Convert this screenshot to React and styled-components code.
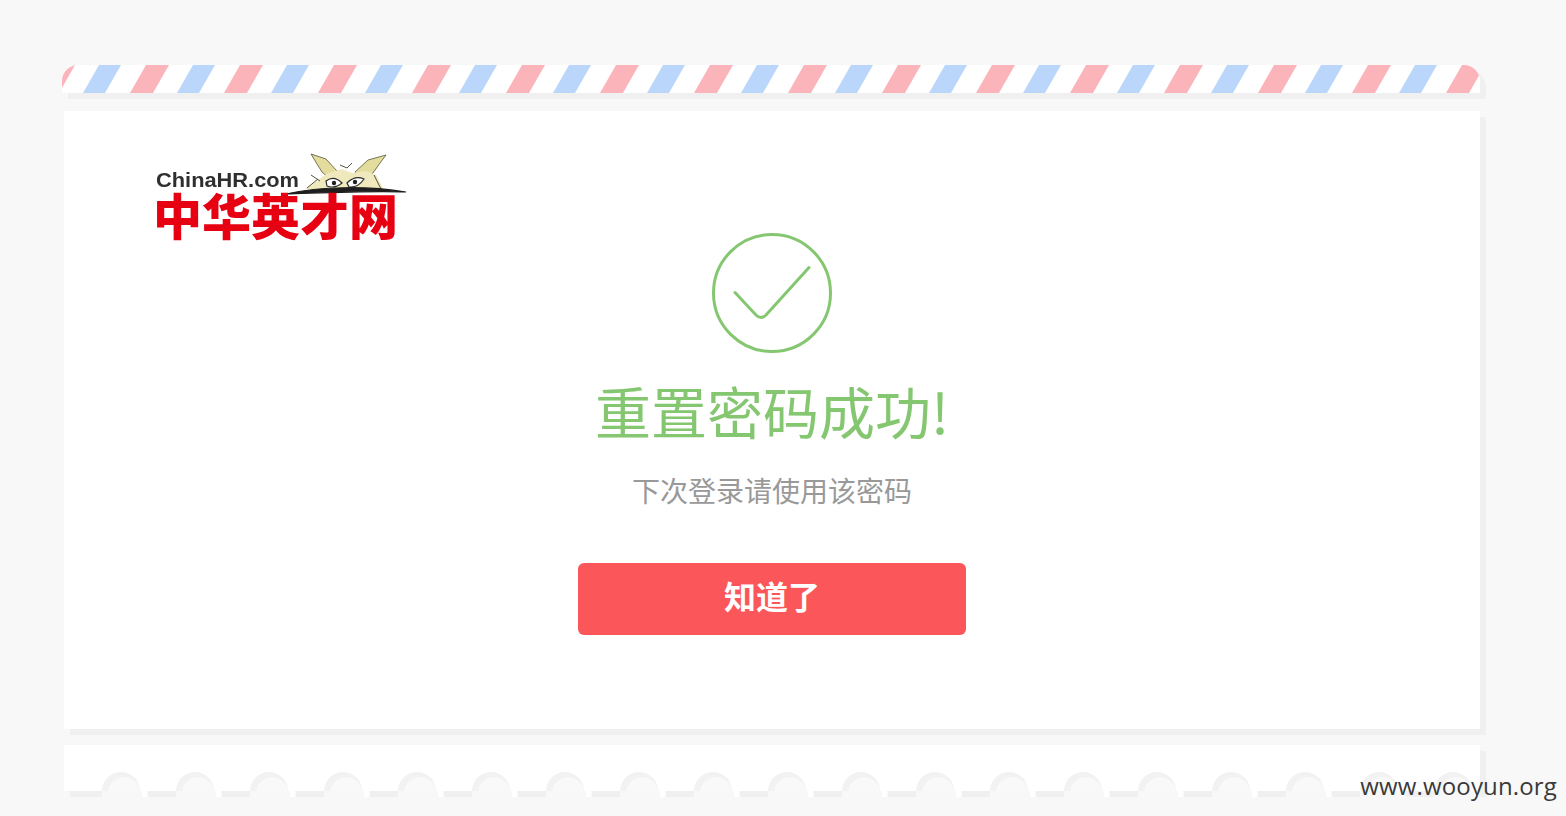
import React from "react";
import styled, { createGlobalStyle } from "styled-components";

const GlobalStyle = createGlobalStyle`
  html, body {
    margin: 0;
    padding: 0;
    background: #f8f8f8;
  }
`;

const Page = styled.div`
  position: relative;
  height: 816px;
  overflow: hidden;
  box-sizing: border-box;
  padding: 65px 0 0 64px;
  background: #f8f8f8;
  font-family: "Noto Sans CJK SC", sans-serif;
`;

const Airmail = styled.div`
  width: 1418px;
  height: 28px;
  margin-left: -2px;
  border-radius: 16px 16px 0 0;
  background: #fff;
  box-shadow: 6px 6px 0 #f0f0f0;
  overflow: hidden;
  svg {
    display: block;
  }
`;

const Card = styled.div`
  width: 1416px;
  height: 618px;
  margin-top: 18px;
  box-sizing: border-box;
  padding-top: 40px;
  background: #fff;
  box-shadow: 6px 6px 0 #f0f0f0;
  display: flex;
  flex-direction: column;
  align-items: center;
`;

const LogoRow = styled.div`
  align-self: stretch;
  height: 82px;
  padding-left: 86px;
`;

const LogoSvg = styled.svg`
  display: block;
  filter: blur(0.55px);
`;

const LogoLatin = styled.text`
  font-family: "Liberation Sans", Arial, sans-serif;
  font-size: 21px;
  font-weight: 700;
  fill: #2f2f2f;
`;

const LogoCjk = styled.text`
  font-family: "Noto Sans CJK SC", sans-serif;
  font-size: 49px;
  font-weight: 900;
  fill: #e60012;
`;

const Title = styled.h1`
  margin: 25px 0 0;
  font-size: 56px;
  line-height: 64px;
  font-weight: 400;
  color: #85c771;
  white-space: nowrap;
`;

const Hint = styled.p`
  margin: 28px 0 0;
  font-size: 28px;
  line-height: 40px;
  font-weight: 400;
  color: #999;
`;

const ConfirmButton = styled.button`
  width: 388px;
  height: 72px;
  margin-top: 53px;
  padding: 0 0 8px;
  border: 0;
  border-radius: 6px;
  background: #fb575a;
  color: #fff;
  font-family: inherit;
  font-size: 32px;
  font-weight: 700;
`;

const Stamp = styled.div`
  position: relative;
  width: 1416px;
  height: 46px;
  margin-top: 16px;
  background: #fff;
  box-shadow: 6px 6px 0 #f0f0f0;
`;

const Perforation = styled.svg`
  position: absolute;
  left: 0;
  top: 26px;
`;

const Watermark = styled.div`
  position: absolute;
  right: 9px;
  top: 768px;
  font-family: "Open Sans", sans-serif;
  font-size: 24px;
  line-height: 36px;
  letter-spacing: 0.15px;
  color: #3a3a3a;
`;

function AirmailStripes() {
  return (
    <svg width="1418" height="28">
      <defs>
        <pattern id="air" width="94" height="28" patternUnits="userSpaceOnUse" x="-26">
          <polygon points="47,28 69,28 85,0 63,0" fill="#bad6fa" />
          <polygon points="0,28 23,28 39,0 16,0" fill="#fbb4ba" />
          <polygon points="94,28 117,28 133,0 110,0" fill="#fbb4ba" />
        </pattern>
      </defs>
      <rect width="1418" height="28" fill="url(#air)" />
    </svg>
  );
}

function Logo() {
  return (
    <LogoSvg width="260" height="100" viewBox="150 148 260 100">
      <path d="M311 151 L326 156 L337 168 L331 177 L322 169 L317 161 Z" fill="#e4dc9c" stroke="#55543f" strokeWidth="0.8" />
      <path d="M386 152 L368 157 L355 169 L362 178 L373 170 L380 160 Z" fill="#e4dc9c" stroke="#55543f" strokeWidth="0.8" />
      <path d="M305 186 L318 177 L328 170 L342 166 L352 170 L366 168 L376 172 L384 187 Z" fill="#efe9bd" />
      <path d="M307 185 L318 176 M311 172 L320 178 M340 162 L347 165 L352 160 M374 172 L381 186" stroke="#55543f" strokeWidth="1" fill="none" />
      <path d="M326 178 Q334 172 342 180 Q335 186 327 183 Z" fill="#fff" stroke="#2c2c2c" strokeWidth="1.2" />
      <path d="M347 180 Q355 172 364 176 Q358 185 349 184 Z" fill="#fff" stroke="#2c2c2c" strokeWidth="1.2" />
      <circle cx="334" cy="180" r="2.2" fill="#222" />
      <circle cx="355" cy="179" r="2.2" fill="#222" />
      <path d="M286 191 C320 183 370 183 406 189 C370 187.5 320 190 286 191 Z" fill="#1e1e1e" stroke="#1e1e1e" strokeWidth="1.2" />
      <LogoLatin x="156" y="184" textLength="143" lengthAdjust="spacingAndGlyphs">ChinaHR.com</LogoLatin>
      <LogoCjk x="153" y="232">中华英才网</LogoCjk>
    </LogoSvg>
  );
}

function CheckIcon() {
  return (
    <svg width="120" height="120" viewBox="0 0 120 120" fill="none" stroke="#85c771" strokeLinecap="round">
      <circle cx="60" cy="60" r="58.5" strokeWidth="3" />
      <path d="M23 59.5 L44 82 Q49 87 54 82 L97 34.5" strokeWidth="3" strokeLinejoin="round" />
    </svg>
  );
}

function PerforationRow() {
  return (
    <Perforation width="1422" height="26">
      <defs>
        <pattern id="perf" width="74" height="26" patternUnits="userSpaceOnUse" x="38">
          <circle cx="19" cy="20" r="19" fill="#f2f2f2" />
          <circle cx="22" cy="22" r="16" fill="#f9f9f9" />
          <rect x="0" y="20" width="46" height="6" fill="#f8f8f8" />
          <rect x="40" y="20" width="5" height="6" fill="#fff" />
        </pattern>
      </defs>
      <rect x="38" width="1384" height="26" fill="url(#perf)" />
    </Perforation>
  );
}

export default function App() {
  return (
    <Page>
      <GlobalStyle />
      <Airmail>
        <AirmailStripes />
      </Airmail>
      <Card>
        <LogoRow>
          <Logo />
        </LogoRow>
        <CheckIcon />
        <Title>重置密码成功!</Title>
        <Hint>下次登录请使用该密码</Hint>
        <ConfirmButton>知道了</ConfirmButton>
      </Card>
      <Stamp>
        <PerforationRow />
      </Stamp>
      <Watermark>www.wooyun.org</Watermark>
    </Page>
  );
}
